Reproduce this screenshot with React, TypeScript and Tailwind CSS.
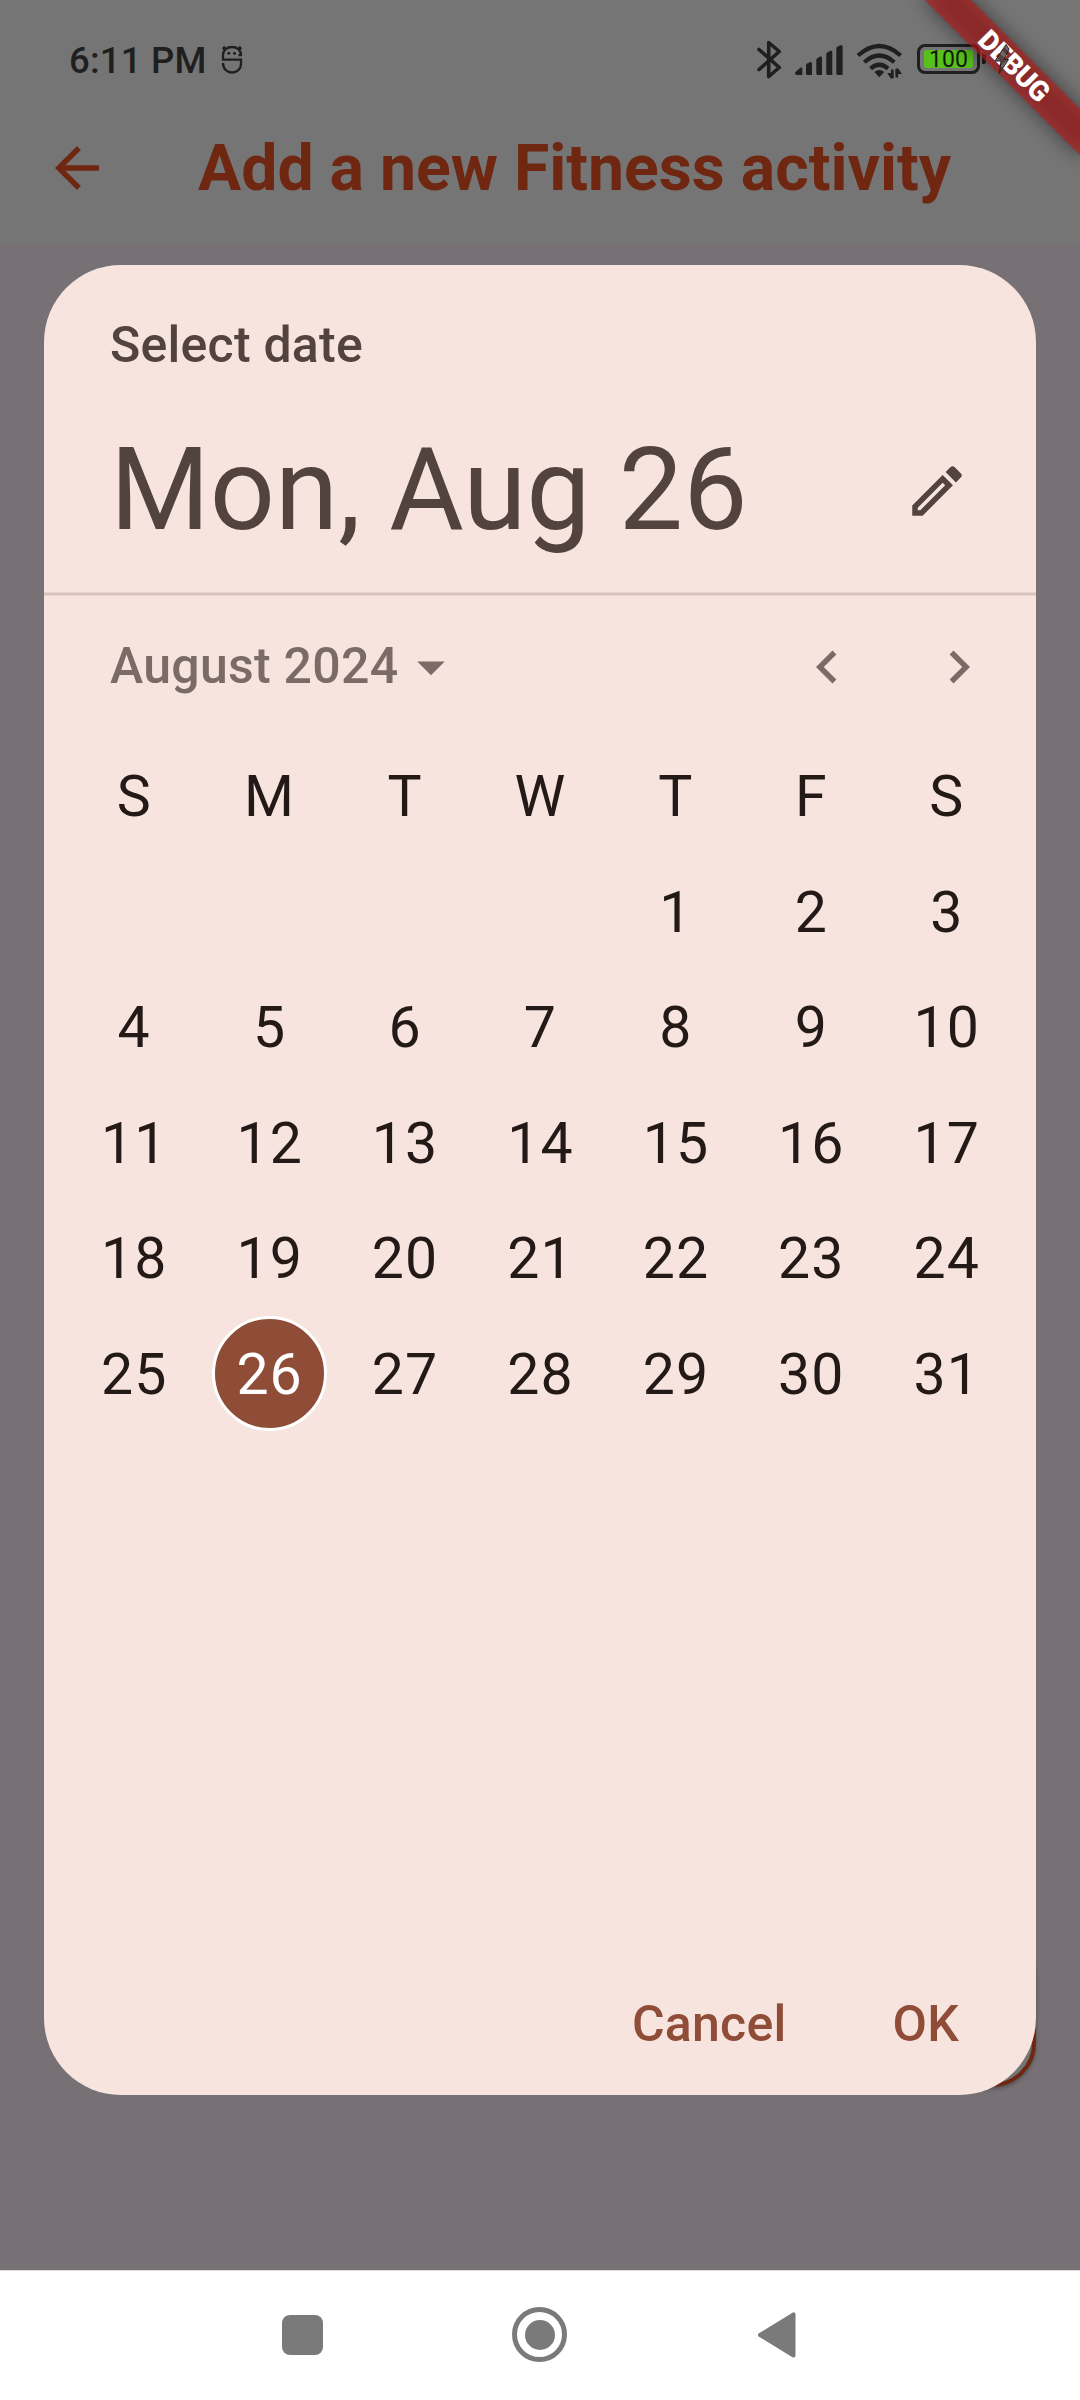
import React from 'react';

const WEEKDAYS = ['S', 'M', 'T', 'W', 'T', 'F', 'S'];
const FIRST_DAY_OFFSET = 4;
const DAYS_IN_MONTH = 31;
const SELECTED_DAY = 26;

type IconProps = { d: string; className: string };

function MaterialIcon({ d, className }: IconProps) {
  return (
    <svg viewBox="0 0 24 24" fill="currentColor" className={className}>
      <path d={d} />
    </svg>
  );
}

function StatusBar() {
  return (
    <div className="flex h-[121px] items-center pl-[69px] text-[#1f1f1f]">
      <span className="w-[138px] text-[36.5px] leading-[44px] font-medium tracking-[0.2px] whitespace-nowrap">6:11 PM</span>
      {/* notification mascot */}
      <svg viewBox="0 0 24 32" className="mt-[-3px] ml-[13px] h-[32px] w-[24px] shrink-0" fill="none" stroke="currentColor" strokeWidth="2.3">
        <path d="M22 12.2H18.5M21 12.2C21 7 17 4 12 4S3 7 3 12V16.7H21V21C21 26 17 29.5 12 29.5S3 26 3 20" />
        <path d="M5.8 6.8 3 4M18.2 6.8 21 4" strokeWidth="3.2" />
        <circle cx="8.8" cy="10.2" r="1.5" fill="currentColor" stroke="none" />
        <circle cx="14.5" cy="10.2" r="1.5" fill="currentColor" stroke="none" />
      </svg>
      {/* bluetooth */}
      <svg viewBox="0 0 25 39" className="mt-[-3px] ml-[513px] h-[39px] w-[25px] shrink-0" fill="none" stroke="currentColor" strokeWidth="3.6" strokeLinejoin="round" strokeLinecap="round">
        <path d="M2 9.5 22.3 27.5 11.7 36.5V2.5L22.3 11.5 2 29.5" />
      </svg>
      {/* signal strength */}
      <svg viewBox="0 0 48 32" className="mt-[-1px] ml-[13px] h-[32px] w-[48px] shrink-0" fill="currentColor">
        <path d="M0 28.5 5.5 23.5Q7.3 23 7.3 24.8V31H2Q0 31 0 28.5Z" />
        <path d="M11 21.5Q11 20.3 12 19.6L15.5 18Q17 18 17 19.5V31H12.5Q11 31 11 29.5Z" />
        <path d="M21.3 16Q21.3 14.8 22.3 14.2L25.5 12.3Q27 12.3 27 13.8V31H22.8Q21.3 31 21.3 29.5Z" />
        <path d="M31.3 10.5Q31.3 9.3 32.3 8.6L35.8 6.6Q37.3 6.6 37.3 8.1V31H32.8Q31.3 31 31.3 29.5Z" />
        <path d="M41.3 4.7Q41.3 3.5 42.3 2.8L46 1Q47.6 1 47.6 2.5V31H42.8Q41.3 31 41.3 29.5Z" />
      </svg>
      {/* wi-fi with traffic arrows */}
      <svg viewBox="0 0 47 36" className="ml-[13px] h-[36px] w-[47px] shrink-0" fill="none" stroke="currentColor" strokeWidth="4.2">
        <path d="M2 12.5Q23.3-6.5 44.6 12.5" />
        <path d="M8.3 19.2Q23.3 5.8 38.3 19.2" />
        <path d="M14.6 25.6Q23.3 18 32 25.6" />
        <path d="M18.4 29Q23.3 24.8 28.2 29L23.3 34.2Z" fill="currentColor" stroke="none" />
        <path d="M36.3 26.5V35M40.8 26V34.5" strokeWidth="2.6" />
        <path d="M37.4 35.5h-2.6L31.2 30h6.2ZM39.7 25.5h2.6L46 31h-6.3Z" fill="currentColor" stroke="none" />
      </svg>
      {/* battery */}
      <div className="mt-[-3px] ml-[14px] flex h-[30px] w-[63px] shrink-0 items-center justify-center rounded-[8px] border-[3px] border-[#1f1f1f]">
        <div className="flex h-[18px] w-[49px] items-center justify-center rounded-[2px] bg-[#57c01c] pt-[2px] text-[23px] leading-[18px] text-[#0d1b06]">
          100
        </div>
      </div>
      <div className="mt-[-3px] ml-[2px] h-[10px] w-[4px] shrink-0 rounded-r-[2px] bg-[#1f1f1f]" />
    </div>
  );
}

function DebugBanner() {
  return (
    <div className="absolute top-0 right-0 h-[220px] w-[260px] overflow-hidden">
      <div className="absolute top-[66.1px] left-[193.9px] h-[33px] w-[220px] -translate-x-1/2 -translate-y-1/2 rotate-45">
        <div className="absolute inset-0 bg-black/50 blur-[10px]" />
        <div className="absolute inset-0 flex items-center justify-center bg-[#b71c1c]/63 text-[28px] leading-[33px] font-black text-white">
          <span className="tracking-[-0.4px]">DEBUG</span>
        </div>
      </div>
      {/* charging bolt */}
      <svg viewBox="0 0 18 30" className="absolute top-[44px] left-[173px] h-[30px] w-[18px]">
        <path d="M13 .5 2 17h6L6.3 29.5 15.5 15.5H11L16 5Z" fill="#4b4444" fillOpacity=".8" stroke="#2c1f1f" strokeWidth="1" />
      </svg>
    </div>
  );
}

function AppHeader() {
  return (
    <header className="flex h-[124px] items-start pt-[14px] pl-[44px] text-[#702711]">
      <MaterialIcon className="size-[66px]" d="M20 11H7.83l5.59-5.59L12 4l-8 8 8 8 1.41-1.41L7.83 13H20v-2z" />
      <h1 className="ml-[88px] text-[64.3px] leading-[66px] font-bold whitespace-nowrap">Add a new Fitness activity</h1>
    </header>
  );
}

function DayCell({ day }: { day: number | null }) {
  if (day === SELECTED_DAY) {
    return (
      <div className="flex justify-center">
        <div className="flex size-[115px] items-center justify-center rounded-full border-[3px] border-white bg-[#8f4c37] pt-[3px] pl-[1px] text-white">
          {day}
        </div>
      </div>
    );
  }
  return <div className="flex items-center justify-center pt-[3px] pl-[1px]">{day}</div>;
}

function DatePicker() {
  const cells: (number | null)[] = [
    ...Array.from({ length: FIRST_DAY_OFFSET }, () => null),
    ...Array.from({ length: DAYS_IN_MONTH }, (_, i) => i + 1),
  ];
  return (
    <section className="absolute top-[265px] left-[44px] flex h-[1830.4px] w-[992px] flex-col overflow-hidden rounded-[77px] bg-[#f7e4de]">
      <div className="flex h-[328px] flex-col border-b border-[#ead5ce] text-[#53433e]">
        <div className="mt-[50px] ml-[66px] text-[50px] leading-[60px] font-medium tracking-[0.24px]">Select date</div>
        <div className="mt-[49px] flex items-center justify-between pr-[66px] pl-[66px]">
          <div className="text-[114.4px] leading-[132px]">Mon, Aug 26</div>
          <MaterialIcon
            className="mt-[2px] size-[66px]"
            d="M14.06 9.02l.92.92L5.92 19H5v-.92l9.06-9.06M17.66 3c-.25 0-.51.1-.7.29l-1.83 1.83 3.75 3.75 1.83-1.83c.39-.39.39-1.02 0-1.41l-2.34-2.34c-.2-.2-.45-.29-.71-.29zm-3.6 3.19L3 17.25V21h3.75L17.81 9.94l-3.75-3.75z"
          />
        </div>
      </div>
      <div className="h-[3px] border-b border-[#ead5ce] bg-[#d8c2bb]" />
      <div className="flex h-[142px] items-center pr-[44px] pl-[66px] text-[#7b6b67]">
        <span className="mt-[-2px] text-[50px] leading-[60px] font-medium tracking-[0.28px]">August 2024</span>
        <MaterialIcon className="size-[66px]" d="M7 10l5 5 5-5z" />
        <div className="ml-auto flex gap-[66px]">
          <MaterialIcon className="size-[66px]" d="M15.41 7.41L14 6l-6 6 6 6 1.41-1.41L10.83 12z" />
          <MaterialIcon className="size-[66px]" d="M10 6L8.59 7.41 13.17 12l-4.58 4.59L10 18l6-6z" />
        </div>
      </div>
      <div className="grid auto-rows-[115.5px] grid-cols-7 px-[22px] text-[57.2px] leading-[66px] tracking-[1.1px] text-[#231917]">
        {WEEKDAYS.map((name, i) => (
          <div key={i} className="flex items-center justify-center pt-[2px] pl-[1px]">{name}</div>
        ))}
        {cells.map((day, i) => (
          <DayCell key={i} day={day} />
        ))}
      </div>
      <div className="mt-auto mb-[41px] flex justify-end gap-[106px] pr-[77px] text-[50px] leading-[60px] font-medium text-[#8f4c37]">
        <button className="tracking-[0.24px]">Cancel</button>
        <button className="tracking-[0.24px]">OK</button>
      </div>
    </section>
  );
}

function NavigationBar() {
  return (
    <nav className="flex h-[130px] items-center border-t border-[#dcdadb] bg-white pb-[2px] pl-[282px] text-[#7a7a7a]">
      <div className="h-[40px] w-[41px] rounded-[8px] bg-[#7a7a7a]" />
      <div className="ml-[189px] flex size-[55px] items-center justify-center rounded-full border-[5px] border-[#7a7a7a]">
        <div className="size-[30px] rounded-full bg-[#7a7a7a]" />
      </div>
      <svg viewBox="0 0 38 46" className="ml-[191px] h-[46px] w-[38px]" fill="currentColor" stroke="currentColor" strokeWidth="4" strokeLinejoin="round">
        <path d="M2 23 35.5 2.4V43.6Z" />
      </svg>
    </nav>
  );
}

export default function App() {
  return (
    <div className="relative flex h-[2400px] w-[1080px] flex-col overflow-hidden bg-[#777175] font-['Roboto',sans-serif]">
      <div className="h-[245px] bg-[#757575]">
        <StatusBar />
        <AppHeader />
      </div>
      <main className="flex-1" />
      <NavigationBar />
      {/* floating action button behind the dialog */}
      <div className="absolute top-[1933px] left-[882px] size-[154px] rounded-[44px] border-[4px] border-[#702711] bg-[#757575] shadow-[0_2px_4px_rgba(0,0,0,0.3)]" />
      <DatePicker />
      <DebugBanner />
    </div>
  );
}
